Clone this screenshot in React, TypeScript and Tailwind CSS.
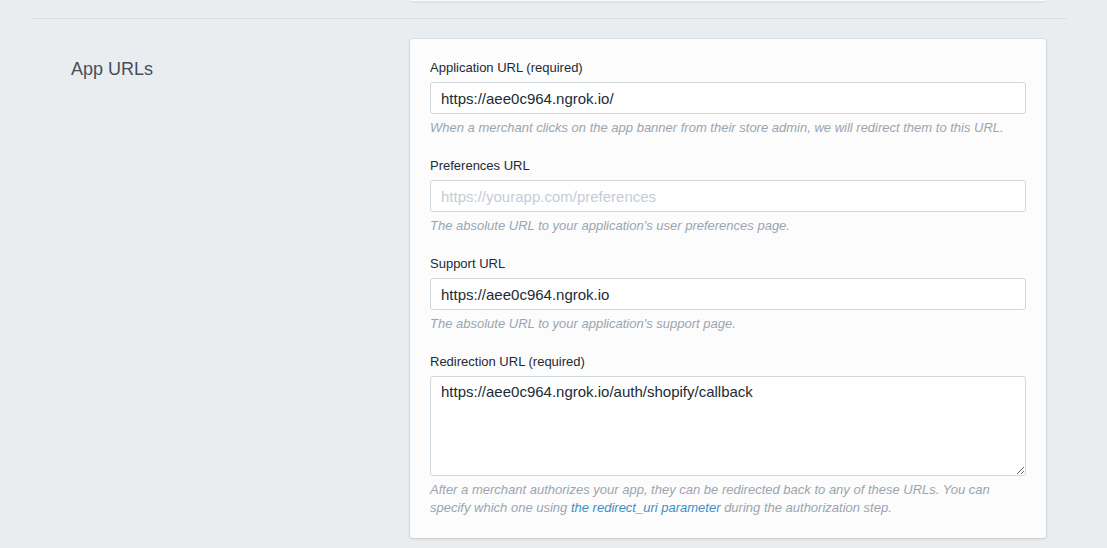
export default function App() {
  const fields = [
    {
      label: "Application URL (required)",
      value: "https://aee0c964.ngrok.io/",
      help: "When a merchant clicks on the app banner from their store admin, we will redirect them to this URL.",
    },
    {
      label: "Preferences URL",
      value: "",
      placeholder: "https://yourapp.com/preferences",
      help: "The absolute URL to your application's user preferences page.",
    },
    {
      label: "Support URL",
      value: "https://aee0c964.ngrok.io",
      help: "The absolute URL to your application's support page.",
    },
  ];

  return (
    <div className="min-h-screen w-full bg-[#e9edf0] font-['Liberation_Sans',Arial,sans-serif] pl-[32px] pr-[41px]">
      {/* bottom edge of the previous card */}
      <div className="flex">
        <div className="ml-[378px] h-px w-[636px] bg-[#fcfcfc] shadow-[0_1px_2px_rgba(63,63,68,0.15)]" />
      </div>

      <div className="mt-[17px] h-px w-full bg-[#d6dce1]" />

      <section className="mt-[20px] flex pr-[20px]">
        <div className="w-[378px] shrink-0 pl-[39px] pt-[18px]">
          <h2 className="text-[18px] leading-[24px] text-[#454f5b]">App URLs</h2>
        </div>

        <div className="w-[636px] rounded-[3px] bg-[#fcfcfc] px-[20px] pt-[19px] pb-[21px] shadow-[0_0_0_1px_rgba(63,63,68,0.05),0_1px_3px_rgba(63,63,68,0.15)]">
          {fields.map((f) => (
            <div key={f.label} className="mb-[19px]">
              <label className="mb-[4px] block text-[13px] leading-[20px] text-[#212b36]">{f.label}</label>
              <input
                type="text"
                defaultValue={f.value}
                placeholder={f.placeholder}
                className="block h-[32px] w-full rounded-[3px] border border-[#cfd7de] bg-white px-[10px] text-[15px] text-[#212b36] placeholder:text-[#c4cdd5] outline-none"
              />
              <p className="mt-[5px] text-[13px] italic leading-[18px] text-[#9ba5b0]">{f.help}</p>
            </div>
          ))}

          <div>
            <label className="mb-[4px] block text-[13px] leading-[20px] text-[#212b36]">Redirection URL (required)</label>
            <textarea
              defaultValue="https://aee0c964.ngrok.io/auth/shopify/callback"
              className="block h-[100px] w-full rounded-[3px] border border-[#cfd7de] bg-white px-[10px] py-[5px] text-[15px] leading-[20px] text-[#212b36] outline-none"
            />
            <p className="mt-[5px] text-[13px] italic leading-[18px] text-[#9ba5b0]">
              After a merchant authorizes your app, they can be redirected back to any of these URLs. You can specify which one using{" "}
              <a href="#" className="text-[#3d8fc9]">the redirect_uri parameter</a> during the authorization step.
            </p>
          </div>
        </div>
      </section>
    </div>
  );
}
